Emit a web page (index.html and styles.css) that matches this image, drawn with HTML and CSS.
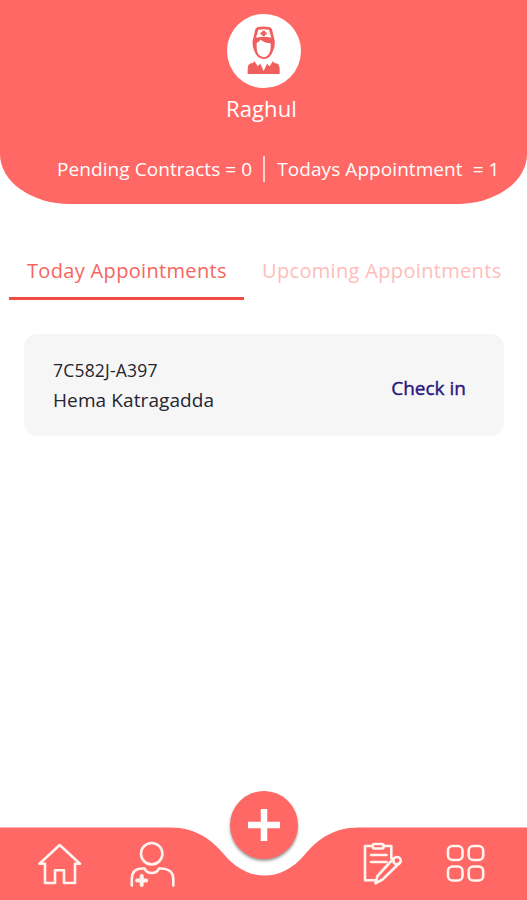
FILE: index.html
```
<!DOCTYPE html>
<html lang="en">
<head>
  <meta charset="UTF-8" />
  <meta name="viewport" content="width=device-width, initial-scale=1.0"/>
  <title>Appointments</title>
  <link rel="stylesheet" href="styles.css">
</head>
<body>
  <header>
    <div class="avatar">
      <svg width="35" height="50" viewBox="140 80 105 150">
        <path class="fill" d="M168 90 Q170 84 177 83 Q193 80 209 83 Q216 84 218 90 L226 124 Q228 138 222 152 Q214 179 193 179 Q172 178 164 152 Q158 138 160 124Z"/>
        <path class="hole" d="M177 91 Q193 88 209 91 L216 115 Q193 109 170 115Z"/>
        <path class="hole" d="M172 131 Q180 127 184 121 Q196 131 214 132 Q216 172 193 174 Q170 170 172 140Z"/>
        <path class="fill" d="M189 94h8v5h5v7h-5v4h-8v-4h-5v-7h5Z"/>
        <path class="fill" d="M145 224 V208 Q146 192 158 192 Q164 190 165 185 L175 201 L183 193 L193 215 L203 193 L211 201 L221 185 Q222 190 228 192 Q240 192 241 208 V224Z"/>
      </svg>
    </div>
    <div class="name">Raghul</div>
    <div class="stats">
      <span class="pending">Pending Contracts = 0</span>
      <span class="divider"></span>
      <span class="today">Todays Appointment&nbsp; = 1</span>
    </div>
  </header>

  <div class="tabs">
    <div class="tab active">Today Appointments</div>
    <div class="tab">Upcoming Appointments</div>
  </div>

  <main>
    <div class="card">
      <div class="patient">
        <div class="code">7C582J-A397</div>
        <div class="patient-name">Hema Katragadda</div>
      </div>
      <a class="checkin">Check in</a>
    </div>
  </main>

  <nav>
    <svg class="nav-bg" width="527" height="73" viewBox="0 0 527 73">
      <path d="M0 .5H170C197 .5 213 14 225 28.500C236 41 249 48.500 264.500 48.500C280 48.500 293 41 304 28.500C316 14 332 .5 359 .5H527V73H0Z"/>
    </svg>
    <div class="nav-items">
      <svg class="icon home" width="44" height="44" viewBox="0 0 44 44">
        <path d="M21.700 2L1.500 20.700H7V40H17V27.300H26V40H37V20.700H42Z"/>
      </svg>
      <svg class="icon doctor" width="46" height="46" viewBox="0 0 46 46">
        <circle cx="21.700" cy="12.700" r="10.700"/>
        <path d="M1.800 44.500V38C1.800 31 6 27.500 12.500 27.500H14.500C17 33.500 26.500 33.500 29 27.500H31C38 27.500 43.300 31 43.300 38V44.500"/>
        <path class="plus" d="M11.700 35V44M7.200 39.500H16.200"/>
      </svg>
      <svg class="icon notes" width="42" height="46" viewBox="0 0 42 46">
        <path d="M10.500 5H3V39.300H14M21.500 5H29.300V17"/>
        <rect x="10.700" y="3" width="11" height="4.500" rx="2"/>
        <path d="M9 14H24.500M9 21H24.500"/>
        <path d="M13.500 42.300L15.500 35L31.500 17.500M20.500 38.500L37 22.500M13.500 42.300L20.500 38.500"/>
        <circle cx="35" cy="19.700" r="3.700"/>
      </svg>
      <svg class="icon menu" width="40" height="40" viewBox="0 0 40 40">
        <rect x="2" y="2" width="14.500" height="14" rx="4.500"/>
        <rect x="22.700" y="2" width="14.500" height="14" rx="4.500"/>
        <rect x="2" y="22.500" width="14.500" height="14" rx="4.500"/>
        <rect x="22.700" y="22.500" width="14.500" height="14" rx="4.500"/>
      </svg>
    </div>
    <button class="add">
      <svg width="32" height="32" viewBox="0 0 32 32"><path d="M16 0V32M0 16H32"/></svg>
    </button>
  </nav>
</body>
</html>
```
FILE: styles.css
```
:root {
  --main-color: #ff6865;
  --accent-color: #f04a43;
}

* {
  box-sizing: border-box;
}

body {
  font-family: 'Open Sans', sans-serif;
  background-color: #fff;
  margin: 0;
  height: 900px;
  display: flex;
  flex-direction: column;
  overflow: hidden;
}

header {
  background-color: var(--main-color);
  color: white;
  height: 204px;
  padding-top: 14px;
  border-radius: 0 0 70px 70px / 0 0 50px 50px;
  display: flex;
  flex-direction: column;
  align-items: center;
}

.avatar {
  width: 74px;
  height: 74px;
  background: white;
  border-radius: 50%;
  display: flex;
  justify-content: center;
  align-items: center;
}

.avatar .fill {
  fill: #ee5f5d;
}

.avatar .hole {
  fill: white;
}

.name {
  font-size: 22px;
  line-height: 30px;
  margin-top: 5px;
  margin-right: 4px;
  letter-spacing: 0.1px;
}

.stats {
  align-self: stretch;
  display: flex;
  align-items: center;
  height: 30px;
  margin-top: 31px;
  padding-left: 57px;
  font-size: 19px;
  letter-spacing: 0.07px;
  white-space: nowrap;
}

.divider {
  width: 2px;
  height: 26px;
  background: #ffd5d4;
  margin: 0 12px 0 11px;
}

.tabs {
  display: flex;
  margin: 40px 0 0 9px;
}

.tab {
  height: 56px;
  padding: 12px 0 0 18px;
  font-size: 20px;
  line-height: 30px;
  letter-spacing: 0.33px;
  color: #ffbcba;
  white-space: nowrap;
}

.tab.active {
  width: 235px;
  color: #f56560;
  border-bottom: 3px solid var(--accent-color);
}

main {
  flex: 1;
  padding: 34px 23px 0 24px;
}

.card {
  height: 102px;
  background: #f6f6f6;
  border-radius: 13px;
  padding: 0 38px 0 29px;
  display: flex;
  justify-content: space-between;
  align-items: center;
}

.patient {
  color: #24242f;
  line-height: 30px;
}

.code {
  font-size: 17.500px;
  letter-spacing: 0.2px;
}

.patient-name {
  font-size: 19px;
  letter-spacing: 0.1px;
}

.checkin {
  color: #2b1680;
  font-size: 19px;
  -webkit-text-stroke: 0.4px #2b1680;
  margin-top: 6px;
}

nav {
  position: relative;
  height: 73px;
}

.nav-bg {
  display: block;
  fill: var(--main-color);
}

.nav-items {
  position: absolute;
  inset: 0;
  display: flex;
  align-items: flex-start;
  padding: 14px 0 0 38px;
}

.icon {
  fill: none;
  stroke: #fff4f0;
  stroke-width: 2.600;
  stroke-linejoin: round;
  stroke-linecap: round;
}

.home {
  margin-top: 2px;
}

.doctor {
  margin-left: 48px;
}

.doctor .plus {
  stroke-width: 4;
}

.notes {
  margin-left: 186px;
}

.menu {
  margin: 3px 0 0 42px;
}

.add {
  position: absolute;
  left: 230px;
  top: -36px;
  width: 68px;
  height: 68px;
  border: none;
  border-radius: 50%;
  background: var(--main-color);
  box-shadow: 0 2px 3px rgba(0, 0, 0, 0.4);
  display: flex;
  justify-content: center;
  align-items: center;
  padding: 0;
}

.add path {
  stroke: white;
  stroke-width: 6.500;
}
```
